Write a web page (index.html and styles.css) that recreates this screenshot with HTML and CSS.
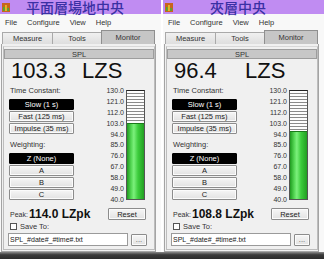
FILE: index.html
```html
<!DOCTYPE html>
<html>
<head>
<meta charset="utf-8">
<link rel="stylesheet" href="styles.css">
</head>
<body>
<div class="screen">
  <div class="win">
    <div class="titlebar">
      <svg class="appicon" width="8" height="9" viewBox="0 0 8 9"><rect width="8" height="9" fill="#c8641e"/><rect x="1" y="4" width="1.5" height="4" fill="#3cb43c"/><rect x="3.2" y="2" width="1.5" height="6" fill="#e8d02a"/><rect x="5.4" y="5" width="1.5" height="3" fill="#3cb43c"/></svg>
      <span class="title">平面層場地中央</span>
    </div>
    <div class="menubar"><span>File</span><span>Configure</span><span>View</span><span>Help</span></div>
    <div class="tabs"><div class="tab">Measure</div><div class="tab">Tools</div><div class="tab sel">Monitor</div></div>
    <div class="page">
      <div class="group">
        <div class="ghead">SPL</div>
        <div class="reading"><span class="val">103.3</span><span class="unit">LZS</span></div>
        <div class="body">
          <div class="controls">
            <div class="lbl">Time Constant:</div>
            <div class="btn on">Slow (1 s)</div>
            <div class="btn">Fast (125 ms)</div>
            <div class="btn">Impulse (35 ms)</div>
            <div class="lbl second">Weighting:</div>
            <div class="btn on">Z (None)</div>
            <div class="btn">A</div>
            <div class="btn">B</div>
            <div class="btn">C</div>
          </div>
          <div class="meter">
            <div class="scale"><span>130.0</span><span>121.0</span><span>112.0</span><span>103.0</span><span>94.0</span><span>85.0</span><span>76.0</span><span>67.0</span><span>58.0</span><span>49.0</span><span>40.0</span></div>
            <div class="bar"><div class="fill" style="height:70.3%"></div></div>
          </div>
        </div>
        <div class="peakrow"><span class="plbl">Peak:</span><span class="pval">114.0 LZpk</span><div class="btn reset">Reset</div></div>
        <div class="saverow"><span class="chk"></span><span>Save To:</span></div>
        <div class="filerow"><div class="field">SPL_#date#_#time#.txt</div><div class="btn dots">...</div></div>
      </div>
    </div>
  </div>
  <div class="win">
    <div class="titlebar">
      <svg class="appicon" width="8" height="9" viewBox="0 0 8 9"><rect width="8" height="9" fill="#c8641e"/><rect x="1" y="4" width="1.5" height="4" fill="#3cb43c"/><rect x="3.2" y="2" width="1.5" height="6" fill="#e8d02a"/><rect x="5.4" y="5" width="1.5" height="3" fill="#3cb43c"/></svg>
      <span class="title">夾層中央</span>
    </div>
    <div class="menubar"><span>File</span><span>Configure</span><span>View</span><span>Help</span></div>
    <div class="tabs"><div class="tab">Measure</div><div class="tab">Tools</div><div class="tab sel">Monitor</div></div>
    <div class="page">
      <div class="group">
        <div class="ghead">SPL</div>
        <div class="reading"><span class="val">96.4</span><span class="unit">LZS</span></div>
        <div class="body">
          <div class="controls">
            <div class="lbl">Time Constant:</div>
            <div class="btn on">Slow (1 s)</div>
            <div class="btn">Fast (125 ms)</div>
            <div class="btn">Impulse (35 ms)</div>
            <div class="lbl second">Weighting:</div>
            <div class="btn on">Z (None)</div>
            <div class="btn">A</div>
            <div class="btn">B</div>
            <div class="btn">C</div>
          </div>
          <div class="meter">
            <div class="scale"><span>130.0</span><span>121.0</span><span>112.0</span><span>103.0</span><span>94.0</span><span>85.0</span><span>76.0</span><span>67.0</span><span>58.0</span><span>49.0</span><span>40.0</span></div>
            <div class="bar"><div class="fill" style="height:62.7%"></div></div>
          </div>
        </div>
        <div class="peakrow"><span class="plbl">Peak:</span><span class="pval">108.8 LZpk</span><div class="btn reset">Reset</div></div>
        <div class="saverow"><span class="chk"></span><span>Save To:</span></div>
        <div class="filerow"><div class="field">SPL_#date#_#time#.txt</div><div class="btn dots">...</div></div>
      </div>
    </div>
  </div>
</div>
<div class="shadow"></div>
</body>
</html>
```
FILE: styles.css
```css
* { box-sizing: border-box; }
html, body { margin: 0; padding: 0; }
body {
  width: 324px;
  height: 259px;
  overflow: hidden;
  background: #ffffff;
  font-family: "Liberation Sans", Arial, sans-serif;
  font-size: 7.5px;
  color: #222;
}
.screen { display: flex; gap: 2px; height: 252px; }
.win {
  width: 161px;
  height: 252px;
  display: flex;
  flex-direction: column;
  background: #f8f8f8;
}
.titlebar {
  height: 14px;
  background: #c08cf2;
  display: flex;
  align-items: center;
  padding-left: 2px;
}
.appicon { display: block; flex: none; }
.title {
  flex: 1;
  text-align: center;
  padding-right: 21px;
  font-family: "Noto Sans CJK TC", "Noto Sans CJK SC", sans-serif;
  font-size: 14px;
  font-weight: 500;
  line-height: 14px;
  height: 14px;
  color: #3a30a4;
}
.menubar {
  height: 16px;
  display: flex;
  align-items: center;
  gap: 10px;
  padding-left: 5px;
  color: #333;
}
.tabs {
  height: 14px;
  display: flex;
  align-items: flex-end;
  padding-left: 2px;
}
.tab {
  height: 12px;
  border: 1px solid #a9a9a9;
  border-bottom: none;
  background: linear-gradient(#f0f0f0, #dedede);
  display: flex;
  align-items: center;
  justify-content: center;
  color: #333;
}
.tab:nth-child(1) { width: 51px; }
.tab:nth-child(2) { width: 50px; margin-left: -1px; }
.tab.sel {
  width: 54px;
  height: 14px;
  margin-left: -1px;
  background: #c6c6c6;
  border-color: #8f8f8f;
}
.page {
  flex: 1;
  margin-left: 1px;
  width: 155px;
  border: 1px solid #a4a4a4;
  border-top: none;
  background: #f0f0f0;
  padding: 2px 0 0 1px;
}
.group {
  width: 152px;
  height: 204px;
  border: 1px solid #bdbdbd;
  border-top: 1px solid #d8d8d8;
  padding: 2px 0 0 0;
  display: flex;
  flex-direction: column;
}
.ghead {
  height: 10px;
  background: #c7c7c7;
  border: 1px solid #9d9d9d;
  display: flex;
  align-items: center;
  justify-content: center;
  color: #333;
}
.reading {
  height: 22px;
  margin-top: 1px;
  display: flex;
  font-size: 22px;
  line-height: 22px;
  color: #111;
  padding-left: 7px;
}
.val { width: 71px; }
.body {
  display: flex;
  padding-left: 5px;
}
.controls {
  width: 65px;
  display: flex;
  flex-direction: column;
}
.lbl {
  height: 10px;
  line-height: 10px;
  margin-top: 4px;
  margin-bottom: 3px;
  padding-left: 1px;
  color: #333;
}
.lbl.second { margin-top: 5px; }
.btn {
  height: 11px;
  margin-bottom: 1px;
  border: 1px solid #8c8c8c;
  border-radius: 1px;
  background: linear-gradient(#f6f6f6, #e2e2e2);
  display: flex;
  align-items: center;
  justify-content: center;
  color: #222;
  box-shadow: inset 0 0 0 1px #fbfbfb;
}
.btn.on {
  background: #000;
  color: #fff;
  border-color: #000;
  box-shadow: none;
}
.meter {
  display: flex;
  margin-left: 25px;
  margin-top: 5px;
}
.scale {
  width: 26px;
  height: 117px;
  display: flex;
  flex-direction: column;
  justify-content: space-between;
  align-items: flex-end;
  font-size: 7px;
  line-height: 8px;
  color: #333;
  padding-right: 1px;
}
.bar {
  width: 19px;
  height: 110px;
  margin-top: 3px;
  margin-left: 1px;
  border: 1px solid #555;
  border-top-color: #222;
  background: repeating-linear-gradient(#fdfdfd 0, #fdfdfd 2px, #8a8a8a 2px, #8a8a8a 3px);
  display: flex;
  align-items: flex-end;
}
.fill {
  width: 100%;
  background: linear-gradient(to right, #1f9a1f, #55d855 25%, #7cf07c 40%, #3ccc3c 65%, #229f22);
  border-top: 1px solid #1a7a1a;
}
.peakrow {
  height: 14px;
  margin-top: 3px;
  display: flex;
  align-items: center;
  padding-left: 6px;
}
.plbl { color: #333; width: 19px; font-size: 7px; }
.pval {
  font-weight: bold;
  font-size: 12px;
  color: #111;
  width: 79px;
}
.btn.reset { width: 38px; height: 12px; margin: 0; }
.saverow {
  height: 10px;
  display: flex;
  align-items: center;
  padding-left: 6px;
  gap: 3px;
  color: #333;
}
.chk {
  width: 7px;
  height: 7px;
  border: 1px solid #555;
  background: #fff;
}
.filerow {
  margin-top: 2px;
  height: 13px;
  display: flex;
  align-items: center;
  padding-left: 4px;
}
.field {
  width: 120px;
  height: 13px;
  border: 1px solid #9a9a9a;
  background: #fff;
  font-size: 7px;
  line-height: 11px;
  padding-left: 1px;
  color: #222;
}
.btn.dots {
  width: 16px;
  height: 12px;
  margin: 0 0 0 3px;
  color: #555;
}
.shadow {
  height: 7px;
  background: linear-gradient(#8a8a8a, #3a3a3a 40%, #2c2c2c);
}
```
